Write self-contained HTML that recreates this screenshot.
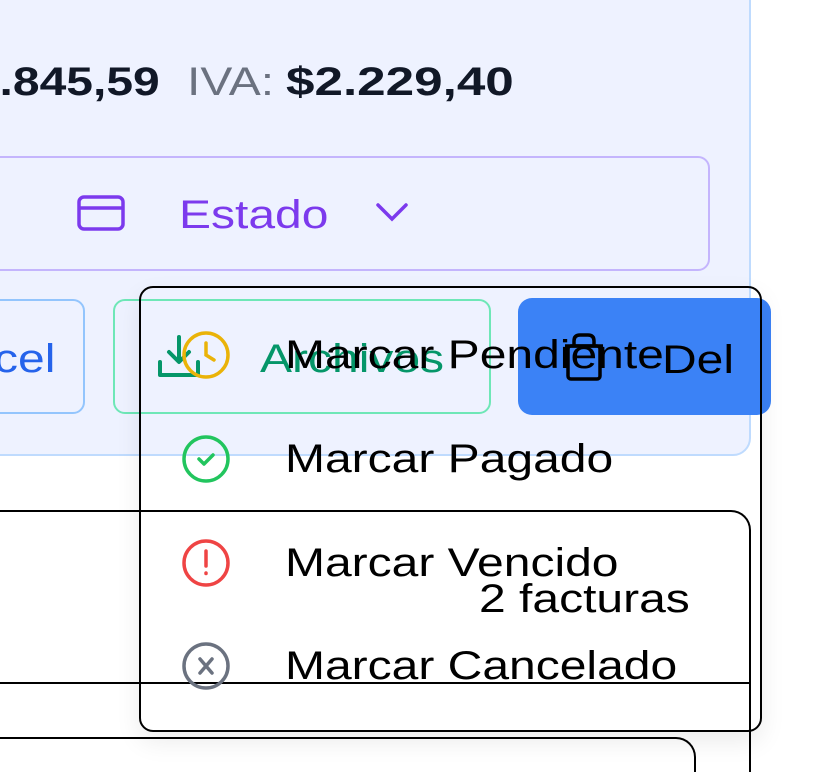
<!DOCTYPE html>
<html><head><meta charset="utf-8"><style>
*{margin:0;padding:0;box-sizing:border-box}
html,body{width:820px;height:772px;overflow:hidden}
body{background:#fff;position:relative;font-family:"Liberation Sans",sans-serif}
.abs{position:absolute}
.t{position:absolute;white-space:nowrap;line-height:1;transform:scaleX(1.2);transform-origin:left center}
</style></head><body>
<div class="abs" style="left:-30px;top:-30px;width:781px;height:486px;background:#eef2ff;border:2px solid #bfdbfe;border-radius:18px"></div>
<div class="t" style="right:660px;top:62px;font-size:40px;font-weight:bold;color:#111827;transform-origin:right center">2.845,59</div>
<div class="t" style="left:187px;top:62px;font-size:40px;color:#6b7280">IVA:</div>
<div class="t" style="left:286px;top:62px;font-size:40px;font-weight:bold;color:#111827;transform:scaleX(1.28)">$2.229,40</div>
<div class="abs" style="left:-30px;top:156px;width:740px;height:115px;border:2px solid #c4b5fd;border-radius:12px"></div>
<svg class="abs" style="left:76px;top:193px" width="50" height="40" viewBox="0 0 50 40" fill="none" stroke="#7c3aed" stroke-width="3.5"><rect x="3" y="4" width="44" height="32" rx="5"/><line x1="3" y1="15" x2="47" y2="15"/></svg>
<div class="t" style="left:179px;top:195px;font-size:40px;color:#7c3aed">Estado</div>
<svg class="abs" style="left:374px;top:200px" width="36" height="24" viewBox="0 0 36 24" fill="none" stroke="#7c3aed" stroke-width="3.5" stroke-linecap="round"><path d="M4 5 L18 19 L32 5"/></svg>
<div class="abs" style="left:-30px;top:299px;width:115px;height:115px;border:2px solid #93c5fd;border-radius:12px"></div>
<div class="t" style="left:-6px;top:339px;font-size:40px;color:#2563eb">cel</div>
<div class="abs" style="left:113px;top:299px;width:378px;height:115px;border:2px solid #6ee7b7;border-radius:12px"></div>
<svg class="abs" style="left:156px;top:334px" width="48" height="46" viewBox="0 0 48 46" fill="none" stroke="#059669" stroke-width="4" stroke-linecap="round" stroke-linejoin="round"><path d="M23 3 V27 M13 18 L23 28 L33 18"/><path d="M4 28 V41 H42 V28"/></svg>
<div class="t" style="left:260px;top:339px;font-size:40px;color:#059669">Archivos</div>
<div class="abs" style="left:518px;top:298px;width:253px;height:117px;background:#3b82f6;border-radius:14px"></div>
<svg class="abs" style="left:562px;top:332px" width="44" height="50" viewBox="0 0 44 50" fill="none" stroke="#000" stroke-width="3.5" stroke-linejoin="round"><rect x="6" y="14" width="32" height="33" rx="3"/><path d="M12 14 V9 Q12 3 18 3 H26 Q32 3 32 9 V14"/><path d="M3 14 H41"/></svg>
<div class="t" style="left:662px;top:340px;font-size:40px;color:#000">Del</div>
<div class="abs" style="left:-30px;top:510px;width:781px;height:262px;border:2px solid #000;border-bottom:none;border-radius:20px 20px 0 0"></div>
<div class="abs" style="left:0;top:682px;width:750px;height:2px;background:#000"></div>
<div class="abs" style="left:-30px;top:737px;width:726px;height:35px;border:2px solid #000;border-bottom:none;border-radius:20px 20px 0 0"></div>
<div class="t" style="left:479px;top:579px;font-size:40px;color:#000">2 facturas</div>
<div class="abs" style="left:139px;top:286px;width:623px;height:446px;border:2px solid #000;border-radius:14px;box-shadow:0 10px 25px rgba(0,0,0,0.08)"></div>
<svg class="abs" style="left:181px;top:330px" width="50" height="50" viewBox="0 0 50 50" fill="none" stroke="#eab308" stroke-width="3.5" stroke-linecap="round"><circle cx="25" cy="25" r="22"/><path d="M25 13 V25 L33 30"/></svg>
<div class="t" style="left:285px;top:335px;font-size:40px;color:#000">Marcar Pendiente</div>
<svg class="abs" style="left:181px;top:434px" width="50" height="50" viewBox="0 0 50 50" fill="none" stroke="#22c55e" stroke-width="3.5" stroke-linecap="round" stroke-linejoin="round"><circle cx="25" cy="25" r="22"/><path d="M18 25 L23 30 L32 21"/></svg>
<div class="t" style="left:285px;top:439px;font-size:40px;color:#000">Marcar Pagado</div>
<svg class="abs" style="left:181px;top:538px" width="50" height="50" viewBox="0 0 50 50" fill="none" stroke="#ef4444" stroke-width="3.5" stroke-linecap="round"><circle cx="25" cy="25" r="22"/><path d="M25 13 V28 M25 35 V35.5"/></svg>
<div class="t" style="left:285px;top:543px;font-size:40px;color:#000">Marcar Vencido</div>
<svg class="abs" style="left:181px;top:641px" width="50" height="50" viewBox="0 0 50 50" fill="none" stroke="#6b7280" stroke-width="3.5" stroke-linecap="round"><circle cx="25" cy="25" r="22"/><path d="M19 18 L31 32 M31 18 L19 32"/></svg>
<div class="t" style="left:285px;top:646px;font-size:40px;color:#000">Marcar Cancelado</div>
</body></html>
